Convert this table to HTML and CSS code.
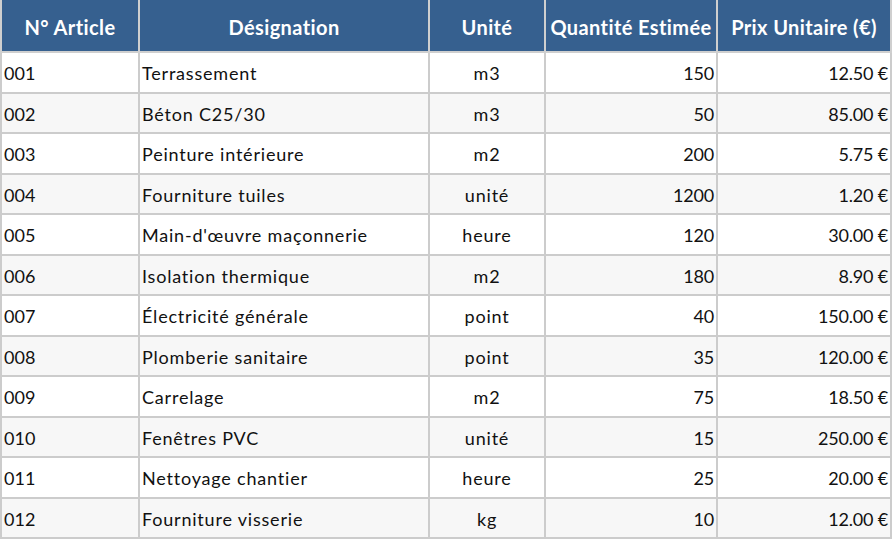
FILE: index.html
```html
<!DOCTYPE html>
<html lang="fr">
<head>
<meta charset="utf-8">
<link rel="stylesheet" href="styles.css">
</head>
<body>
<table class="devis">
<colgroup>
<col class="c1"><col class="c2"><col class="c3"><col class="c4"><col class="c5">
</colgroup>
<thead>
<tr><th>N° Article</th><th>Désignation</th><th>Unité</th><th>Quantité Estimée</th><th>Prix Unitaire (€)</th></tr>
</thead>
<tbody>
<tr><td>001</td><td class="txt">Terrassement</td><td class="ctr">m3</td><td class="num">150</td><td class="num">12.50 €</td></tr>
<tr><td>002</td><td class="txt">Béton C25/30</td><td class="ctr">m3</td><td class="num">50</td><td class="num">85.00 €</td></tr>
<tr><td>003</td><td class="txt">Peinture intérieure</td><td class="ctr">m2</td><td class="num">200</td><td class="num">5.75 €</td></tr>
<tr><td>004</td><td class="txt">Fourniture tuiles</td><td class="ctr">unité</td><td class="num">1200</td><td class="num">1.20 €</td></tr>
<tr><td>005</td><td class="txt">Main-d'œuvre maçonnerie</td><td class="ctr">heure</td><td class="num">120</td><td class="num">30.00 €</td></tr>
<tr><td>006</td><td class="txt">Isolation thermique</td><td class="ctr">m2</td><td class="num">180</td><td class="num">8.90 €</td></tr>
<tr><td>007</td><td class="txt">Électricité générale</td><td class="ctr">point</td><td class="num">40</td><td class="num">150.00 €</td></tr>
<tr><td>008</td><td class="txt">Plomberie sanitaire</td><td class="ctr">point</td><td class="num">35</td><td class="num">120.00 €</td></tr>
<tr><td>009</td><td class="txt">Carrelage</td><td class="ctr">m2</td><td class="num">75</td><td class="num">18.50 €</td></tr>
<tr><td>010</td><td class="txt">Fenêtres PVC</td><td class="ctr">unité</td><td class="num">15</td><td class="num">250.00 €</td></tr>
<tr><td>011</td><td class="txt">Nettoyage chantier</td><td class="ctr">heure</td><td class="num">25</td><td class="num">20.00 €</td></tr>
<tr><td>012</td><td class="txt">Fourniture visserie</td><td class="ctr">kg</td><td class="num">10</td><td class="num">12.00 €</td></tr>
</tbody>
</table>
</body>
</html>
```
FILE: styles.css
```css
html, body {
  margin: 0;
  padding: 0;
  background: #ffffff;
}
body {
  font-family: Lato, "Open Sans", sans-serif;
  color: #111111;
}
.devis {
  border-collapse: collapse;
  table-layout: fixed;
  width: 890px;
}
.c1 { width: 138px; }
.c2 { width: 290px; }
.c3 { width: 116px; }
.c4 { width: 172px; }
.c5 { width: 174px; }
.devis th {
  background: #36608f;
  color: #ffffff;
  font-weight: 700;
  font-size: 20px;
  letter-spacing: 0.4px;
  line-height: 22px;
  padding: 16px 0 13px;
  border: 2px solid #cfcfcf;
  border-top: none;
  text-align: center;
  white-space: nowrap;
  overflow: hidden;
}
.devis td {
  font-size: 18px;
  line-height: 20.5px;
  padding: 10px 2px 8px;
  border: 2px solid #cccccc;
  white-space: nowrap;
}
.devis td.txt,
.devis td.ctr {
  letter-spacing: 0.8px;
}
.devis td.num {
  text-align: right;
  letter-spacing: -0.2px;
}
.devis tbody tr:nth-child(even) td {
  background: #f7f7f7;
}
.devis td.ctr { text-align: center; }
```
